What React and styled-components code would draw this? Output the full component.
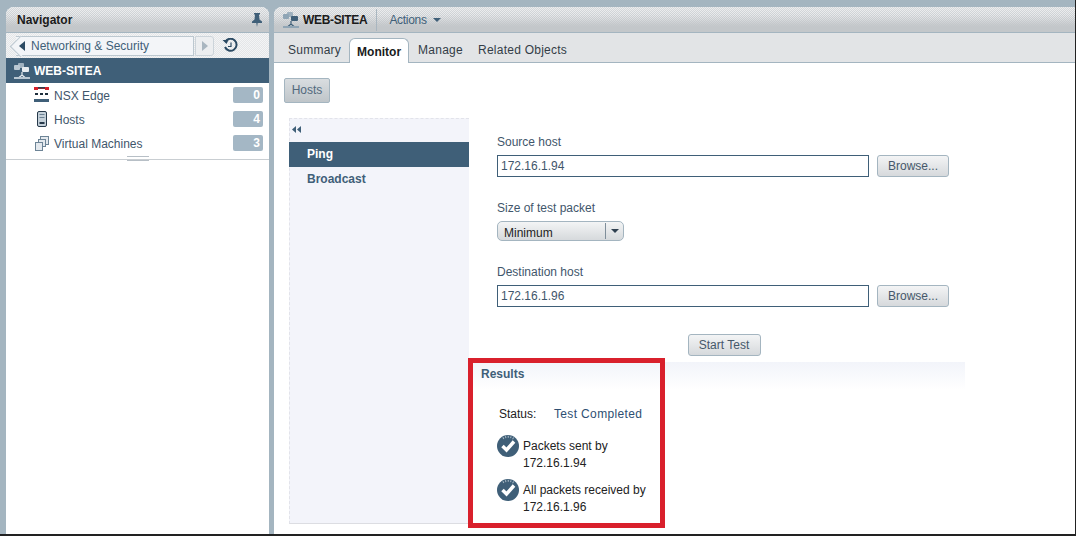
import React from 'react';
import styled, { createGlobalStyle, css } from 'styled-components';

const GlobalStyle = createGlobalStyle`
  html, body {
    margin: 0;
    padding: 0;
    background: #fff;
  }
  * {
    box-sizing: border-box;
  }
`;

const dither = css`
  background-image: repeating-conic-gradient(rgba(255, 255, 255, 0.55) 0 25%, transparent 0 50%);
  background-size: 2px 2px;
`;

// dotted light band that fades out towards the bottom of a header
const headerBand = css`
  position: relative;
  background: linear-gradient(#d6d9dc, #c3c7ca 70%);
  border-bottom: 1px solid #a4b5c0;

  &::before {
    content: '';
    position: absolute;
    inset: 0;
    ${dither}
    mask-image: linear-gradient(#000 30%, transparent 80%);
  }

  & > * {
    position: relative;
  }
`;

const Page = styled.div`
  position: relative;
  width: 1076px;
  height: 536px;
  display: flex;
  gap: 5px;
  padding: 7px 0 0 6px;
  overflow: hidden;
  background: #a4b5c0;
  border-right: 1px solid #222;
  border-bottom: 2px solid #222;
  font-family: 'Liberation Sans', Arial, sans-serif;
  font-size: 12px;
  color: #3f566b;
`;

const Navigator = styled.aside`
  width: 263px;
  display: flex;
  flex-direction: column;
  background: #fff;
  border-radius: 8px 8px 0 0;
  overflow: hidden;
`;

const NavHeader = styled.header`
  ${headerBand}
  height: 26px;
  flex: none;
  display: flex;
  align-items: center;
  justify-content: space-between;
  padding: 0 6px 0 11px;
  font-weight: bold;
  color: #1b1b1b;
`;

const Crumbs = styled.div`
  height: 25px;
  flex: none;
  display: flex;
  align-items: center;
  padding: 0 0 0 10px;
  ${dither}
  background-color: #e4e6e8;
`;

const BackButton = styled.div`
  position: relative;
  width: 178px;
  height: 20px;
  display: flex;
  align-items: center;
  gap: 6px;
  padding-left: 3px;
  background: #f3f5f8;
  border: 1px solid #bcc8d0;
  border-left: 0;
  color: #3f5f78;

  &::before {
    content: '';
    position: absolute;
    left: -3px;
    top: 2px;
    width: 14px;
    height: 14px;
    transform: rotate(45deg);
    background: #f3f5f8;
    border-left: 1px solid #bcc8d0;
    border-bottom: 1px solid #bcc8d0;
  }

  & > * {
    position: relative;
  }
`;

const ForwardButton = styled.div`
  width: 19px;
  height: 20px;
  margin-left: 1px;
  display: flex;
  align-items: center;
  justify-content: center;
  border: 1px solid #ccd4da;
  border-radius: 0 3px 3px 0;
  background: #eceef0;
`;

const HistoryWrap = styled.div`
  margin-left: 8px;
  display: flex;
`;

const SelectedRow = styled.div`
  height: 25px;
  flex: none;
  display: flex;
  align-items: center;
  gap: 3px;
  padding-left: 7px;
  background: #3f5f78;
  color: #fff;
  font-weight: bold;
`;

const NavList = styled.ul`
  margin: 0;
  padding: 0;
  list-style: none;
`;

const NavItem = styled.li`
  height: 24px;
  display: flex;
  align-items: center;
  padding: 0 6px 0 28px;
`;

const ItemIcon = styled.span`
  width: 15px;
  height: 16px;
  margin-right: 5px;
  display: flex;
  align-items: center;
  justify-content: center;
`;

const ItemLabel = styled.span`
  flex: 1;
  padding-top: 2px;
`;

const Badge = styled.span`
  width: 30px;
  height: 16px;
  padding-right: 3px;
  text-align: right;
  line-height: 16px;
  font-weight: bold;
  color: #fff;
  background: #a4b7c5;
  border-radius: 2px;
`;

const Resizer = styled.div`
  position: relative;
  height: 4px;
  margin-top: 1px;
  border-bottom: 1px solid #c9ced2;

  &::after {
    content: '';
    position: absolute;
    left: 121px;
    top: 0;
    width: 22px;
    height: 3px;
    border-top: 1px solid #b7bfc6;
    border-bottom: 1px solid #b7bfc6;
  }
`;

const Main = styled.main`
  flex: 1;
  min-width: 0;
  display: flex;
  flex-direction: column;
  background: #fff;
  border-radius: 8px 0 0 0;
  overflow: hidden;
`;

const MainHeader = styled.header`
  ${headerBand}
  height: 26px;
  flex: none;
  display: flex;
  align-items: center;
  padding-left: 8px;
`;

const ObjectTitle = styled.strong`
  margin-left: 3px;
  padding-right: 9px;
  line-height: 22px;
  letter-spacing: -0.33px;
  border-right: 1px solid #a9b6c0;
  color: #1b1b1b;
`;

const ActionsMenu = styled.span`
  margin-left: 12px;
  display: flex;
  align-items: center;
  gap: 6px;
  letter-spacing: -0.3px;
  color: #3f5f78;

  &::after {
    content: '';
    border-left: 4px solid transparent;
    border-right: 4px solid transparent;
    border-top: 4px solid #3f5f78;
  }
`;

const TabBar = styled.nav`
  height: 30px;
  flex: none;
  display: flex;
  align-items: flex-end;
  padding-left: 7px;
  background: #e2e4e6;
  border-bottom: 1px solid #a4b5c0;
`;

const Tab = styled.div`
  height: ${(p) => (p.$active ? '25px' : '24px')};
  margin-bottom: ${(p) => (p.$active ? '-1px' : '0')};
  padding: ${(p) => (p.$active ? '0 7px' : '0 8px 0 7px')};
  margin-right: ${(p) => (p.$active ? '2px' : '0')};
  line-height: ${(p) => (p.$active ? '26px' : '25px')};
  letter-spacing: ${(p) => (p.$active ? '0' : '0.25px')};
  color: ${(p) => (p.$active ? '#1b1b1b' : '#333d46')};
  font-weight: ${(p) => (p.$active ? 'bold' : 'normal')};
  background: ${(p) => (p.$active ? '#fff' : 'transparent')};
  border: ${(p) => (p.$active ? '1px solid #a4b5c0' : '0')};
  border-bottom: 0;
  border-radius: 6px 6px 0 0;
`;

const Content = styled.div`
  flex: 1;
  min-height: 0;
  padding: 15px 0 0 10px;
`;

const SubTab = styled.div`
  width: 46px;
  height: 25px;
  line-height: 22px;
  text-align: center;
  color: #52697d;
  background: linear-gradient(#d9dde0, #bfc5c9);
  border: 1px solid #a4b5c0;
  border-radius: 2px;
`;

const Workspace = styled.div`
  display: flex;
  height: 406px;
  margin: 15px 0 0 5px;
`;

const SideMenu = styled.div`
  width: 180px;
  flex: none;
  background: #f3f4fa;
  border: 1px dashed #e2e3ea;
  border-right: 0;
  border-bottom: 1px solid #dcdde2;
`;

const Collapse = styled.div`
  height: 23px;
  display: flex;
  align-items: center;
  padding: 0 0 2px 2px;
`;

const MenuItem = styled.div`
  height: 25px;
  line-height: 24px;
  margin-left: -1px;
  padding-left: 18px;
  font-weight: bold;
  color: ${(p) => (p.$active ? '#fff' : '#3f5f78')};
  background: ${(p) => (p.$active ? '#3f5f78' : 'transparent')};
`;

const Panel = styled.div`
  width: 496px;
  display: flex;
  flex-direction: column;
`;

const Form = styled.div`
  height: 244px;
  flex: none;
  padding: 17px 0 0 28px;
`;

const FormLabel = styled.div`
  height: 14px;
  line-height: 14px;
  margin-bottom: 6px;
`;

const FieldRow = styled.div`
  display: flex;
  gap: 8px;
  margin-bottom: 24px;
`;

const TextBox = styled.input`
  width: 372px;
  height: 22px;
  padding: 0 3px;
  font: inherit;
  color: #3f566b;
  border: 1px solid #3f5f78;
  outline: 0;
  background: #fff;
`;

const Button = styled.button`
  width: ${(p) => p.$width}px;
  height: 22px;
  padding: 0;
  font: inherit;
  color: #46586a;
  background: linear-gradient(#f3f4f5, #d6d9dc);
  border: 1px solid #a4b5c0;
  border-radius: 3px;
`;

const SelectBox = styled.div`
  width: 127px;
  height: 20px;
  margin-bottom: 24px;
  display: flex;
  align-items: center;
  justify-content: space-between;
  padding-left: 6px;
  color: #222;
  background: linear-gradient(#f3f4f5, #d6d9dc);
  border: 1px solid #a4b5c0;
  border-radius: 5px;
`;

const SelectText = styled.span`
  padding-top: 3px;
`;

const SelectArrow = styled.span`
  width: 18px;
  height: 16px;
  display: flex;
  align-items: center;
  justify-content: center;
  border-left: 1px solid #7f8e9a;

  &::after {
    content: '';
    border-left: 4px solid transparent;
    border-right: 4px solid transparent;
    border-top: 4px solid #2f4050;
  }
`;

const StartRow = styled.div`
  display: flex;
  justify-content: center;
  padding: 3px 14px 0 0;
`;

const Results = styled.section`
  flex: 1;
  padding: 5px 0 0 12px;
  color: #222;
  background: linear-gradient(#f2f4fa, #fff 28px);
`;

const ResultsTitle = styled.h3`
  margin: 0 0 26px;
  font-size: 12px;
  line-height: 14px;
  color: #3f5f78;
`;

const StatusRow = styled.div`
  display: flex;
  margin: 0 0 14px 18px;
  line-height: 14px;
`;

const StatusLabel = styled.span`
  width: 55px;
`;

const StatusValue = styled.span`
  letter-spacing: 0.35px;
  color: #2e4f72;
`;

const CheckRow = styled.div`
  display: flex;
  gap: 4px;
  margin: 0 0 7px 16px;
  width: 170px;
  line-height: 17px;
`;

const CheckText = styled.span`
  padding-top: 3px;
`;

const RedBox = styled.div`
  position: absolute;
  left: 468px;
  top: 358px;
  width: 197px;
  height: 170px;
  border: 5px solid #d9202c;
  pointer-events: none;
`;

function SiteIcon({ light }) {
  const c = light ? '#b9c7d2' : '#8fa5b5';
  const d = light ? '#e8edf1' : '#3f5f78';
  return (
    <svg width="18" height="18" viewBox="0 0 18 18">
      <rect x="1" y="3" width="6" height="5" rx="1" fill={c} />
      <rect x="5" y="1" width="6" height="5" rx="1" fill={c} opacity="0.8" />
      <rect x="9" y="5" width="7" height="5" rx="1" fill={d} />
      <path d="M9 10v3M6 15.500l3-2.500 3 2.500" stroke={d} strokeWidth="1.200" fill="none" />
      <rect x="1" y="15" width="16" height="2" fill={c} />
    </svg>
  );
}

function EdgeIcon() {
  return (
    <svg width="15" height="16" viewBox="0 0 15 16">
      <rect x="0" y="0" width="15" height="1" fill="#2a3d4e" />
      <rect x="0" y="0" width="4" height="3" fill="#d5202a" />
      <rect x="11" y="0" width="4" height="3" fill="#d5202a" />
      <rect x="4" y="1" width="7" height="1" fill="#7d2a33" />
      <rect x="1" y="6" width="3" height="2" fill="#1f2f3d" />
      <rect x="6" y="6" width="3" height="2" fill="#1f2f3d" />
      <rect x="11" y="6" width="3" height="2" fill="#1f2f3d" />
      <rect x="0" y="12" width="15" height="3" fill="#3f5f78" />
    </svg>
  );
}

function HostIcon() {
  return (
    <svg width="10" height="16" viewBox="0 0 10 16">
      <rect x="0.500" y="0.500" width="9" height="15" rx="1.500" fill="#c4d0d9" stroke="#26394a" />
      <rect x="2.500" y="3" width="5" height="1" fill="#6b8193" />
      <rect x="2.500" y="6" width="5" height="1" fill="#6b8193" />
      <rect x="2.500" y="11" width="5" height="2" fill="#26394a" />
    </svg>
  );
}

function VmIcon() {
  return (
    <svg width="14" height="15" viewBox="0 0 14 15" fill="#e4e9ee" stroke="#6d8496">
      <rect x="5.500" y="0.500" width="8" height="8" />
      <rect x="3.500" y="3.500" width="7" height="7" />
      <rect x="0.500" y="6.500" width="7" height="8" />
    </svg>
  );
}

function PinIcon() {
  return (
    <svg width="12" height="14" viewBox="0 0 12 14">
      <path d="M3 0h6v1.500H8l.5 5L11 8.500V10H6.700L6 14l-.7-4H1V8.500l2.500-2L4 1.500H3z" fill="#3f5f78" />
    </svg>
  );
}

function HistoryIcon() {
  return (
    <svg width="17" height="16" viewBox="0 0 17 16">
      <path d="M3.500 3.500A6 6 0 1 1 3 9" fill="none" stroke="#2b4a63" strokeWidth="2" />
      <path d="M0.500 2h6l-2 4z" fill="#2b4a63" />
      <path d="M9 4.500V8.500H6" fill="none" stroke="#2b4a63" strokeWidth="1.200" />
    </svg>
  );
}

function CheckIcon() {
  return (
    <svg width="22" height="22" viewBox="0 0 22 22" style={{ flex: 'none' }}>
      <circle cx="11" cy="11" r="11" fill="#3f5f78" />
      <path d="M6 3.500A9 9 0 0 1 17 4" fill="none" stroke="#a9bac7" strokeWidth="2" strokeDasharray="1 1.500" />
      <path d="M5.500 11l4 4 7.500-8.500" fill="none" stroke="#fff" strokeWidth="3.500" />
    </svg>
  );
}

function Triangle({ dir, color }) {
  const d = dir === 'left' ? 'M6 0v10L0 5z' : 'M0 0v10l6-5z';
  return (
    <svg width="6" height="10" viewBox="0 0 6 10">
      <path d={d} fill={color} />
    </svg>
  );
}

function DoubleLeft() {
  return (
    <svg width="10" height="7" viewBox="0 0 10 7">
      <path d="M4 0v7L0 3.500zM9 0v7L5 3.500z" fill="#3f5f78" />
    </svg>
  );
}

const navItems = [
  { label: 'NSX Edge', count: 0, icon: <EdgeIcon /> },
  { label: 'Hosts', count: 4, icon: <HostIcon /> },
  { label: 'Virtual Machines', count: 3, icon: <VmIcon /> },
];

function App() {
  return (
    <Page>
      <GlobalStyle />
      <Navigator>
        <NavHeader>
          <span>Navigator</span>
          <PinIcon />
        </NavHeader>
        <Crumbs>
          <BackButton>
            <Triangle dir="left" color="#2b4a63" />
            <span>Networking &amp; Security</span>
          </BackButton>
          <ForwardButton>
            <Triangle dir="right" color="#a9b6c0" />
          </ForwardButton>
          <HistoryWrap>
            <HistoryIcon />
          </HistoryWrap>
        </Crumbs>
        <SelectedRow>
          <SiteIcon light />
          WEB-SITEA
        </SelectedRow>
        <NavList>
          {navItems.map((item) => (
            <NavItem key={item.label}>
              <ItemIcon>{item.icon}</ItemIcon>
              <ItemLabel>{item.label}</ItemLabel>
              <Badge>{item.count}</Badge>
            </NavItem>
          ))}
        </NavList>
        <Resizer />
      </Navigator>

      <Main>
        <MainHeader>
          <SiteIcon />
          <ObjectTitle>WEB-SITEA</ObjectTitle>
          <ActionsMenu>Actions</ActionsMenu>
        </MainHeader>
        <TabBar>
          <Tab>Summary</Tab>
          <Tab $active>Monitor</Tab>
          <Tab>Manage</Tab>
          <Tab>Related Objects</Tab>
        </TabBar>
        <Content>
          <SubTab>Hosts</SubTab>
          <Workspace>
            <SideMenu>
              <Collapse>
                <DoubleLeft />
              </Collapse>
              <MenuItem $active>Ping</MenuItem>
              <MenuItem>Broadcast</MenuItem>
            </SideMenu>
            <Panel>
              <Form>
                <FormLabel>Source host</FormLabel>
                <FieldRow>
                  <TextBox readOnly value="172.16.1.94" />
                  <Button $width={72}>Browse...</Button>
                </FieldRow>
                <FormLabel>Size of test packet</FormLabel>
                <SelectBox>
                  <SelectText>Minimum</SelectText>
                  <SelectArrow />
                </SelectBox>
                <FormLabel>Destination host</FormLabel>
                <FieldRow>
                  <TextBox readOnly value="172.16.1.96" />
                  <Button $width={72}>Browse...</Button>
                </FieldRow>
                <StartRow>
                  <Button $width={73}>Start Test</Button>
                </StartRow>
              </Form>
              <Results>
                <ResultsTitle>Results</ResultsTitle>
                <StatusRow>
                  <StatusLabel>Status:</StatusLabel>
                  <StatusValue>Test Completed</StatusValue>
                </StatusRow>
                <CheckRow>
                  <CheckIcon />
                  <CheckText>Packets sent by 172.16.1.94</CheckText>
                </CheckRow>
                <CheckRow>
                  <CheckIcon />
                  <CheckText>All packets received by 172.16.1.96</CheckText>
                </CheckRow>
              </Results>
            </Panel>
          </Workspace>
        </Content>
      </Main>
      <RedBox />
    </Page>
  );
}

export default App;
